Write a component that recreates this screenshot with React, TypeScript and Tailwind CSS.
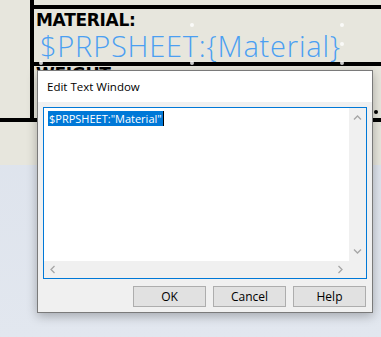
const ui = { fontFamily: '"Open Sans", "Noto Sans", sans-serif' };
const drawBold = { fontFamily: '"DejaVu Sans", sans-serif' };
const drawLight = { fontFamily: '"Open Sans", "Noto Sans", sans-serif' };

const Chevron = ({ dir }: { dir: "up" | "down" | "left" | "right" }) => {
  const rot = { up: 0, right: 90, down: 180, left: 270 }[dir];
  return (
    <svg width="9" height="9" viewBox="0 0 9 9" style={{ transform: `rotate(${rot}deg)` }}>
      <path d="M1 6.5 L4.5 3 L8 6.5" fill="none" stroke="#a6a6a6" strokeWidth="1.3" />
    </svg>
  );
};

const Handle = ({ x, y }: { x: number; y: number }) => (
  <span
    className="absolute h-[4px] w-[4px] rounded-full bg-white/80"
    style={{ left: x - 2, top: y - 2 }}
  />
);

const DialogButton = ({ label }: { label: string }) => (
  <button
    type="button"
    className="flex h-[21px] w-[73px] items-center justify-center border border-[#adadad] bg-[#e1e1e1] text-[12px] leading-none text-black"
  >
    {label}
  </button>
);

const App = () => {
  return (
    <div className="relative h-[337px] w-[381px] overflow-hidden bg-gradient-to-b from-[#dbe1eb] to-[#e2e7ef]">
      {/* drawing sheet */}
      <div className="h-[165px] bg-[#e7e6dd]">
        <div className="flex h-[118px]">
          <div className="w-[30px]" />
          <div className="w-[4px] bg-black" />
          <div className="flex flex-1 flex-col">
            <div className="h-[5px]" />
            <div className="h-[4px] bg-black" />
            <div className="h-[53px] pt-[3px]">
              <div className="pl-[2px] text-[17px] font-bold leading-[17px] tracking-[-0.3px] text-black" style={drawBold}>
                MATERIAL:
              </div>
              <div className="mt-[3px] pl-[6px] text-[29px] font-light leading-[28px] tracking-[0.8px] text-[#4b9ff2]" style={drawLight}>
                $PRPSHEET:{"{"}Material{"}"}
              </div>
            </div>
            <div className="h-[4px] bg-black" />
            <div className="h-[52px]">
              <div className="h-[5px] overflow-hidden">
                <div className="pl-[2px] text-[17px] font-bold leading-[17px] tracking-[-0.3px] text-black" style={drawBold}>
                  WEIGHT:
                </div>
              </div>
            </div>
          </div>
        </div>
        <div className="h-[4px] bg-black" />
      </div>

      <Handle x={192} y={25} />
      <Handle x={342} y={25} />
      <Handle x={342} y={44} />
      <Handle x={41} y={63} />
      <Handle x={192} y={63} />
      <Handle x={342} y={63} />
      <span className="absolute left-[374px] top-[110px] h-[4px] w-[4px] rounded-full bg-black" />

      {/* Edit Text Window dialog */}
      <div
        className="absolute left-[37px] top-[70px] flex h-[243px] w-[336px] flex-col border border-[#7a7a7a] bg-[#f0f0f0] shadow-[0_3px_10px_rgba(0,0,0,0.28)]"
        style={ui}
      >
        <div className="flex h-[31px] items-center bg-white pl-[9px] text-[11.5px] text-black">
          Edit Text Window
        </div>
        <div className="flex flex-1 flex-col px-[5px] pt-[5px]">
          <div className="flex h-[172px] flex-col border border-[#0078d7] bg-white">
            <div className="flex flex-1">
              <div className="flex-1 pl-[4px] pt-[3px]">
                <div className="flex h-[15px] items-center">
                  <span className="bg-[#0078d7] px-[1px] text-[11px] leading-[15px] text-white">
                    $PRPSHEET:"Material"
                  </span>
                  <span className="h-[15px] w-[1px] bg-black" />
                </div>
              </div>
              <div className="flex w-[17px] flex-col items-center justify-between bg-[#f0f0f0] py-[5px]">
                <Chevron dir="up" />
                <Chevron dir="down" />
              </div>
            </div>
            <div className="flex h-[17px]">
              <div className="flex flex-1 items-center justify-between bg-[#f0f0f0] px-[4px]">
                <Chevron dir="left" />
                <Chevron dir="right" />
              </div>
              <div className="w-[17px] bg-[#f0f0f0]" />
            </div>
          </div>
          <div className="mt-[7px] flex justify-end gap-[7px] pr-[1px]">
            <DialogButton label="OK" />
            <DialogButton label="Cancel" />
            <DialogButton label="Help" />
          </div>
        </div>
      </div>
    </div>
  );
};

export default App;
